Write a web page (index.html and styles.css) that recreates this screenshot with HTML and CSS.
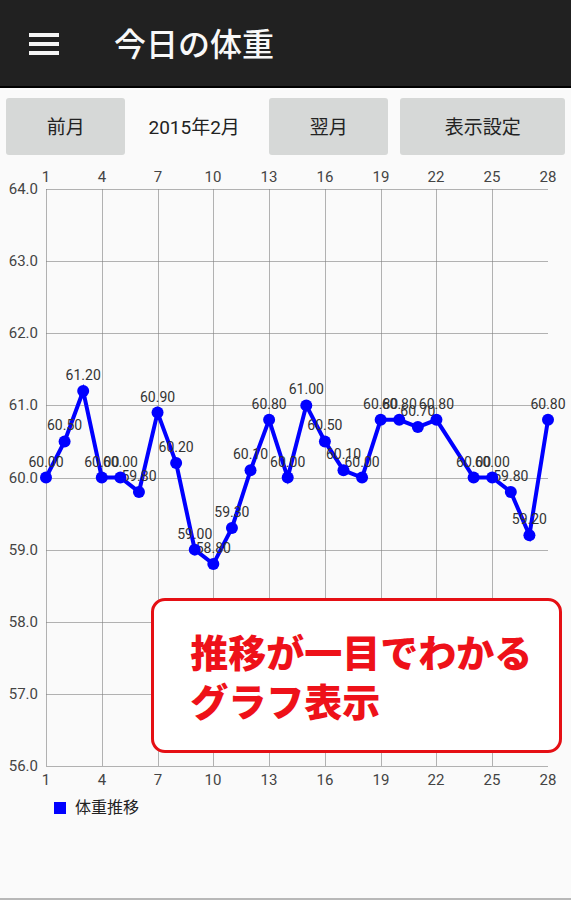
FILE: index.html
```html
<!DOCTYPE html>
<html lang="ja">
<head>
  <meta charset="UTF-8" />
  <meta name="viewport" content="width=device-width, initial-scale=1" />
  <title>今日の体重</title>
  <link rel="stylesheet" href="styles.css">
</head>
<body>

  <header class="header">
    <button class="menu-btn" type="button" aria-label="メニュー">
      <svg width="32" height="24" viewBox="0 0 32 24" fill="#f5f5f5">
        <rect x="1" y="1" width="30" height="4" />
        <rect x="1" y="10" width="30" height="4" />
        <rect x="1" y="19" width="30" height="4" />
      </svg>
    </button>
    <h1>今日の体重</h1>
  </header>

  <main>
    <div class="toolbar">
      <button type="button">前月</button>
      <span class="month">2015年2月</span>
      <button type="button">翌月</button>
      <button type="button">表示設定</button>
    </div>

    <div class="chart-wrap">
      <svg id="chart" class="chart" viewBox="0 0 571 625" role="img" aria-label="体重推移"></svg>
      <p class="callout">推移が一目でわかる<br>グラフ表示</p>
    </div>

    <div class="legend"><span class="swatch"></span>体重推移</div>
  </main>

  <script src="chart.js"></script>
</body>
</html>
```

FILE: styles.css
```css
* {
  box-sizing: border-box;
}

body {
  margin: 0;
  min-height: 100vh;
  background-color: #fafafa;
  border-bottom: 2px solid #b8b8b8;
  color: #222;
  font-family: Roboto, 'Noto Sans CJK JP', sans-serif;
}

.header {
  display: flex;
  align-items: center;
  gap: 54px;
  height: 88px;
  padding-top: 2px;
  padding-left: 28px;
  background-color: #212121;
  border-bottom: 2px solid #000;
}

.header h1 {
  margin: 0;
  padding-top: 2px;
  color: #f8f8f8;
  font-size: 32px;
  font-weight: 500;
  line-height: 48px;
}

.menu-btn {
  display: flex;
  padding: 0;
  border: none;
  background: none;
  cursor: pointer;
}

.toolbar {
  display: grid;
  grid-template-columns: 119fr 119fr 119fr 164fr;
  gap: 12px;
  padding: 10px 6px;
}

.toolbar button,
.month {
  height: 57px;
  padding: 2px 0 0;
  color: #222;
  font-family: inherit;
  font-size: 19px;
  line-height: 55px;
  text-align: center;
  white-space: nowrap;
}

.toolbar .month {
  padding-right: 6px;
}

.toolbar button {
  border: none;
  border-radius: 3px;
  background-color: #d6d8d7;
  cursor: pointer;
}

.chart-wrap {
  position: relative;
}

.chart {
  display: block;
  width: 100%;
}

.grid-line {
  stroke: #808080;
  stroke-opacity: 0.6;
  stroke-width: 1;
}

.axis-label {
  fill: #444;
  font-size: 15px;
}

.value-label {
  fill: #333;
  font-size: 14px;
  text-anchor: middle;
}

.x-label {
  text-anchor: middle;
}

.y-label {
  text-anchor: end;
}

.line {
  fill: none;
  stroke: #00f;
  stroke-width: 4;
}

.dot {
  fill: #00f;
}

/* message box over the lower part of the chart */
.callout {
  position: absolute;
  top: 69.2%;
  left: 26.5%;
  right: 1.6%;
  margin: 0;
  padding: 25px 36px 26px;
  border: 3px solid #e50f14;
  border-radius: 14px;
  background-color: #fff;
  color: #ee1119;
  font-family: 'Noto Sans CJK JP', sans-serif;
  font-size: 38px;
  font-weight: 900;
  line-height: 49px;
  white-space: nowrap;
}

.legend {
  display: flex;
  align-items: center;
  gap: 9px;
  margin-top: 6px;
  padding-left: 54px;
  font-size: 16px;
  line-height: 24px;
}

.swatch {
  width: 12px;
  height: 12px;
  background-color: #00f;
}
```

FILE: chart.js
```js
// [day, weight]
const weights = [
  [1, 60.0], [2, 60.5], [3, 61.2], [4, 60.0], [5, 60.0], [6, 59.8], [7, 60.9],
  [8, 60.2], [9, 59.0], [10, 58.8], [11, 59.3], [12, 60.1], [13, 60.8], [14, 60.0],
  [15, 61.0], [16, 60.5], [17, 60.1], [18, 60.0], [19, 60.8], [20, 60.8], [21, 60.7],
  [22, 60.8], [24, 60.0], [25, 60.0], [26, 59.8], [27, 59.2], [28, 60.8]
];

const plot = { left: 46, right: 548, top: 24, bottom: 601 };
const minY = 56, maxY = 64, lastDay = 28;
const chart = document.getElementById('chart');

const px = day => plot.left + (day - 1) * (plot.right - plot.left) / (lastDay - 1);
const py = kg => plot.bottom - (kg - minY) * (plot.bottom - plot.top) / (maxY - minY);

function add(tag, attrs, text) {
  const el = document.createElementNS('http://www.w3.org/2000/svg', tag);
  for (const key in attrs) el.setAttribute(key, attrs[key]);
  if (text !== undefined) el.textContent = text;
  chart.appendChild(el);
}

// Horizontal grid and weight labels
for (let kg = minY; kg <= maxY; kg++) {
  const y = Math.round(py(kg));
  add('line', { class: 'grid-line', x1: plot.left, x2: plot.right, y1: y + 0.5, y2: y + 0.5 });
  add('text', { class: 'axis-label y-label', x: 38, y: y + 5 }, kg.toFixed(1));
}

// Vertical grid and day labels
for (let day = 1; day <= lastDay; day += 3) {
  const x = Math.round(px(day));
  if (day < lastDay) {
    add('line', { class: 'grid-line', x1: x + 0.5, x2: x + 0.5, y1: plot.top, y2: plot.bottom });
  }
  add('text', { class: 'axis-label x-label', x: x, y: plot.top - 7 }, day);
  add('text', { class: 'axis-label x-label', x: x, y: plot.bottom + 19 }, day);
}

add('polyline', { class: 'line', points: weights.map(([d, kg]) => px(d) + ',' + py(kg)).join(' ') });
weights.forEach(([d, kg]) => add('text', { class: 'value-label', x: px(d), y: py(kg) - 11 }, kg.toFixed(2)));
weights.forEach(([d, kg]) => add('circle', { class: 'dot', cx: px(d), cy: py(kg), r: 6 }));
```
